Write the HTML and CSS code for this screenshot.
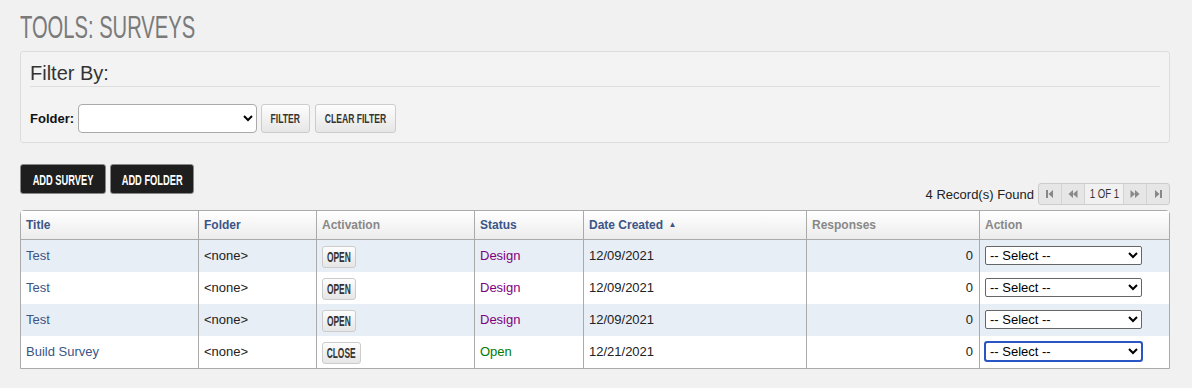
FILE: index.html
```html
<!DOCTYPE html>
<html lang="en">
<head>
    <meta charset="UTF-8">
    <title>Tools: Surveys</title>
    <link rel="stylesheet" href="styles.css">
</head>
<body>
    <h1 class="page-title"><span class="title-text">TOOLS: SURVEYS</span></h1>

    <div class="filter-box">
        <h2 class="filter-title">Filter By:</h2>
        <div class="filter-row">
            <label for="folder">Folder:</label>
            <select id="folder" class="folder-select"><option></option></select>
            <button class="btn-light btn-filter"><span class="cond">FILTER</span></button>
            <button class="btn-light btn-clear"><span class="cond">CLEAR FILTER</span></button>
        </div>
    </div>

    <div class="toolbar">
        <button class="btn-dark btn-survey"><span class="cond-dark">ADD SURVEY</span></button>
        <button class="btn-dark btn-folder"><span class="cond-dark">ADD FOLDER</span></button>
    </div>

    <div class="pager-row">
        <span class="count">4 Record(s) Found</span>
        <div class="pager">
            <span class="pg"><svg width="8" height="10" viewBox="0 0 8 10"><rect x="0" y="1" width="2" height="8" fill="#888"/><path d="M7 1 L2.5 5 L7 9 Z" fill="#888"/></svg></span>
            <span class="pg"><svg width="10" height="10" viewBox="0 0 10 10"><path d="M5 1 L0.5 5 L5 9 Z M9.5 1 L5 5 L9.5 9 Z" fill="#888"/></svg></span>
            <span class="pg pg-num"><span class="cond-num">1 OF 1</span></span>
            <span class="pg"><svg width="10" height="10" viewBox="0 0 10 10"><path d="M0.5 1 L5 5 L0.5 9 Z M5 1 L9.5 5 L5 9 Z" fill="#888"/></svg></span>
            <span class="pg"><svg width="8" height="10" viewBox="0 0 8 10"><path d="M1 1 L5.5 5 L1 9 Z" fill="#888"/><rect x="6" y="1" width="2" height="8" fill="#888"/></svg></span>
        </div>
    </div>

    <table class="grid">
        <thead>
            <tr>
                <th class="col-title sort">Title</th>
                <th class="col-folder sort">Folder</th>
                <th class="col-act">Activation</th>
                <th class="col-status sort">Status</th>
                <th class="col-date sort">Date Created <span class="arrow">&#9650;</span></th>
                <th class="col-resp">Responses</th>
                <th class="col-action">Action</th>
            </tr>
        </thead>
        <tbody>
            <tr class="alt">
                <td><a href="#">Test</a></td>
                <td>&lt;none&gt;</td>
                <td><button class="btn-small"><span class="cond-small">OPEN</span></button></td>
                <td class="design">Design</td>
                <td>12/09/2021</td>
                <td class="num">0</td>
                <td><select class="act-select"><option>-- Select --</option></select></td>
            </tr>
            <tr>
                <td><a href="#">Test</a></td>
                <td>&lt;none&gt;</td>
                <td><button class="btn-small"><span class="cond-small">OPEN</span></button></td>
                <td class="design">Design</td>
                <td>12/09/2021</td>
                <td class="num">0</td>
                <td><select class="act-select"><option>-- Select --</option></select></td>
            </tr>
            <tr class="alt">
                <td><a href="#">Test</a></td>
                <td>&lt;none&gt;</td>
                <td><button class="btn-small"><span class="cond-small">OPEN</span></button></td>
                <td class="design">Design</td>
                <td>12/09/2021</td>
                <td class="num">0</td>
                <td><select class="act-select"><option>-- Select --</option></select></td>
            </tr>
            <tr>
                <td><a href="#">Build Survey</a></td>
                <td>&lt;none&gt;</td>
                <td><button class="btn-small btn-close"><span class="cond-small">CLOSE</span></button></td>
                <td class="open">Open</td>
                <td>12/21/2021</td>
                <td class="num">0</td>
                <td><select class="act-select focused"><option>-- Select --</option></select></td>
            </tr>
        </tbody>
    </table>
</body>
</html>
```

FILE: styles.css
```css
body {
    margin: 0;
    padding: 0 22px 0 20px;
    background: #f1f1f1;
    font-family: "Liberation Sans", Arial, sans-serif;
    color: #222;
}
/* no condensed face is installed, so squeeze the regular one */
.cond, .cond-dark, .cond-num, .cond-small, .title-text {
    display: inline-block;
    white-space: nowrap;
}
.cond { transform: scaleX(0.66); }
.cond-dark { transform: scaleX(0.62); }
.cond-num { transform: scaleX(0.8); }
.cond-small { transform: scaleX(0.6); }
.page-title {
    margin: 0;
    padding-top: 12px;
    height: 38px;
    box-sizing: border-box;
    font-weight: normal;
    font-size: 31px;
    line-height: 31px;
    color: #7a7a7a;
    white-space: nowrap;
}
.title-text {
    transform: scaleX(0.65);
    transform-origin: left center;
}
.filter-box {
    margin-top: 13px;
    height: 92px;
    box-sizing: border-box;
    border: 1px solid #ddd;
    border-radius: 3px;
    background: #f3f3f3;
    padding: 0 9px;
}
.filter-title {
    margin: 0;
    padding-top: 9px;
    height: 25px;
    font-size: 20px;
    font-weight: normal;
    line-height: 24px;
    color: #333;
    border-bottom: 1px solid #ddd;
}
.filter-row {
    display: flex;
    align-items: center;
    gap: 4px;
    margin-top: 17px;
}
.filter-row label {
    font-size: 13px;
    font-weight: bold;
    color: #111;
}
.folder-select {
    width: 179px;
    height: 29px;
    border: 1px solid #aaa;
    border-radius: 4px;
    background: #fff;
}
.btn-light, .btn-small, .btn-dark {
    display: inline-flex;
    align-items: center;
    justify-content: center;
    padding: 0;
    overflow: visible;
    cursor: pointer;
    font-family: "Liberation Sans", Arial, sans-serif;
    font-weight: bold;
}
.btn-light, .btn-small {
    color: #333;
    border: 1px solid #ccc;
    border-radius: 3px;
    background: linear-gradient(#fdfdfd, #e6e6e6);
}
.btn-light {
    height: 29px;
    font-size: 13px;
}
.btn-filter { width: 49px; }
.btn-clear { width: 81px; margin-left: 1px; }
.toolbar {
    display: flex;
    gap: 4px;
    margin-top: 21px;
}
.btn-dark {
    height: 30px;
    background: #1e1e1e;
    color: #fff;
    border: 1px solid #888;
    border-radius: 3px;
    font-size: 15px;
}
.btn-survey { width: 86px; }
.btn-folder { width: 84px; }
.pager-row {
    display: flex;
    justify-content: flex-end;
    align-items: center;
    gap: 4px;
    margin-top: -11px;
    height: 22px;
}
.count {
    font-size: 13px;
    color: #222;
}
.pager {
    display: flex;
    height: 20px;
    border: 1px solid #ccc;
    border-radius: 3px;
    background: #e6e6e6;
}
.pg {
    display: flex;
    align-items: center;
    justify-content: center;
    width: 22px;
    border-left: 1px solid #d4d4d4;
}
.pg:first-child {
    border-left: none;
}
.pg-num {
    width: 38px;
    background: #f1f1f1;
    font-size: 12px;
    color: #333;
}
.grid {
    margin-top: 5px;
    width: 1150px;
    border-collapse: separate;
    border-spacing: 0;
    border: 1px solid #aaa;
    border-radius: 4px 4px 0 0;
    background: #fff;
    font-size: 13px;
    box-shadow: 0 1px 0 #ccc;
}
.grid th {
    height: 28px;
    text-align: left;
    padding: 0 5px;
    font-size: 12px;
    font-weight: bold;
    color: #888;
    background: linear-gradient(#fff, #ececec);
    border-bottom: 1px solid #aaa;
    border-left: 1px solid #aaa;
}
.grid th:first-child, .grid td:first-child {
    border-left: none;
}
.grid th.sort {
    color: #3b5587;
}
.grid td {
    height: 30px;
    padding: 0 5px 2px;
    border-left: 1px solid #aaa;
    color: #222;
}
.grid tr.alt td {
    background: #e8eef5;
}
.grid a {
    color: #3b5587;
    text-decoration: none;
}
.arrow {
    font-size: 8px;
    vertical-align: 2px;
    margin-left: 2px;
}
.col-title { width: 167px; }
.col-folder { width: 107px; }
.col-act { width: 147px; }
.col-status { width: 98px; }
.col-date { width: 212px; }
.col-resp { width: 162px; }
.grid td.design { color: #800080; }
.grid td.open { color: #007a00; }
.grid td.num {
    text-align: right;
    padding-right: 6px;
}
.btn-small {
    width: 34px;
    height: 22px;
    font-size: 14px;
    margin-top: 3px;
}
.btn-close { width: 39px; }
.act-select {
    width: 157px;
    height: 19px;
    font-size: 13px;
    border: 1px solid #666;
    border-radius: 2px;
    background: #fff;
    margin-top: 0;
}
.act-select.focused {
    outline: 2px solid #2a55c4;
    outline-offset: -1px;
}
```
